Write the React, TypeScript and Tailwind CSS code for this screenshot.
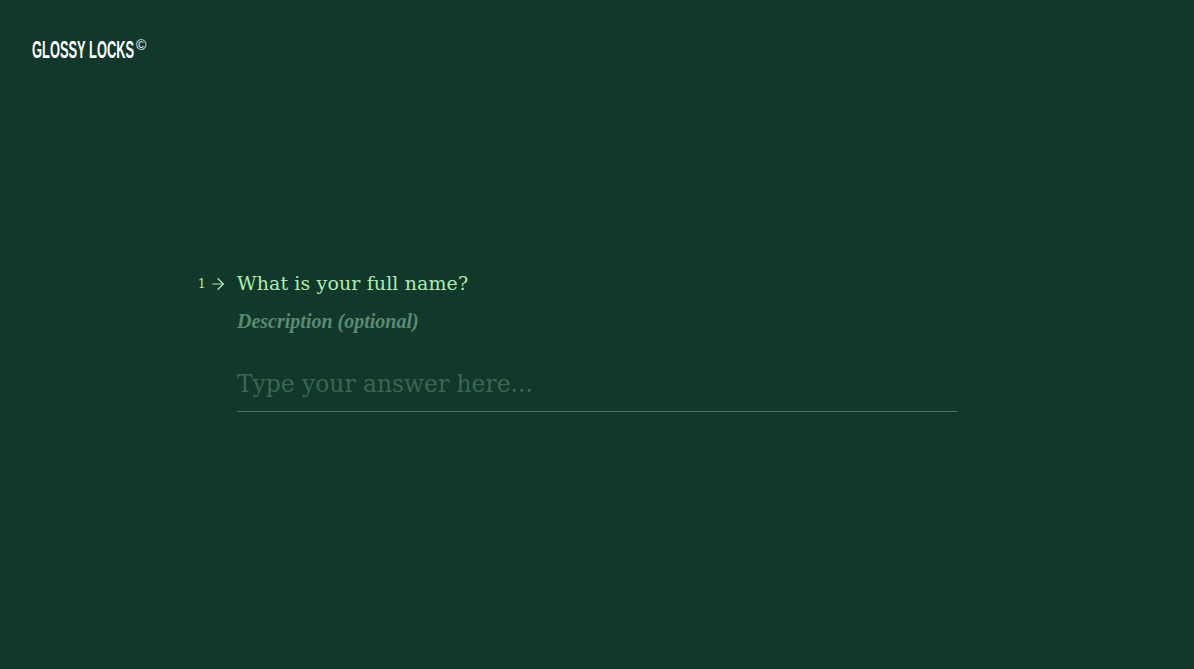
import { ArrowRight } from "lucide-react";

const SERIF = "font-['DejaVu_Serif','Liberation_Serif',serif]";

export default function App() {
  return (
    <div className="flex h-screen w-full flex-col overflow-hidden bg-[#11382a]">
      <header className="flex h-[100px] items-start px-8 pt-[38px]">
        <div className="flex h-6 items-start text-white">
          <span className="w-[104px] origin-left scale-x-[0.56] whitespace-nowrap font-['Liberation_Sans',sans-serif] text-[23px] leading-6 font-bold">
            GLOSSY LOCKS
          </span>
          <span className="-mt-[1px] font-['Liberation_Sans',sans-serif] text-[14px] leading-4">©</span>
        </div>
      </header>

      <main className="mx-auto mt-[170px] w-[720px]">
        <div className={`relative text-[#adebb3] ${SERIF}`}>
          <div className="absolute top-0 -left-[39px] flex h-[28px] items-center gap-[3px]">
            <span className="text-[12px] leading-none">1</span>
            <ArrowRight size={18} strokeWidth={1.6} />
          </div>
          <h1 className="text-[19px] leading-[26px] font-normal tracking-[0.006em]">What is your full name?</h1>
        </div>
        <p className="mt-[13px] font-['Liberation_Serif',serif] text-[20px] leading-[24px] font-bold text-[#5c8a70] italic">
          Description (optional)
        </p>
        <div className="mt-[34px] border-b border-[#4b7a62] pb-[10px]">
          <input
            readOnly
            placeholder="Type your answer here..."
            className={`block h-[34px] w-full bg-transparent text-[23.4px] leading-[34px] outline-none placeholder:text-[#3b6650] ${SERIF}`}
          />
        </div>
      </main>
    </div>
  );
}
